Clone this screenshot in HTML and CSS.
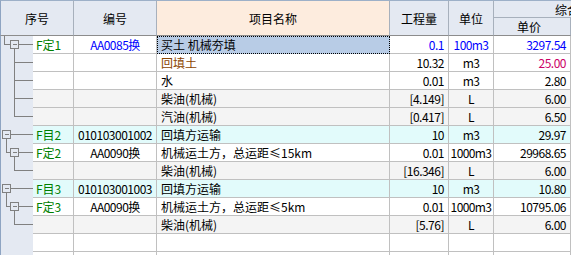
FILE: index.html
```html
<!DOCTYPE html>
<html lang="zh-CN">
<head>
<meta charset="utf-8">
<title>清单定额</title>
<link rel="stylesheet" href="styles.css">
</head>
<body>
<div class="grid">
  <div class="h h-seq">序号</div>
  <div class="h h-code">编号</div>
  <div class="h h-name">项目名称</div>
  <div class="h h-qty">工程量</div>
  <div class="h h-unit">单位</div>
  <div class="h h-group"><span class="grp">综合单价</span></div>
  <div class="h h-price">单价</div>

  <!-- row 1 -->
  <div class="t"><svg width="33" height="18" viewBox="0 0 33 18"><path d="M4.5 0V8.5H10.5M18.5 8.5H33M14.5 12.5V18" /><rect x="10.5" y="4.5" width="8" height="8"/><path d="M12.5 8.5H16.5"/></svg></div>
  <div class="c seq green">F定1</div>
  <div class="c code blue">AA0085换</div>
  <div class="c name sel">买土 机械夯填</div>
  <div class="c num blue">0.1</div>
  <div class="c unit blue">100m3</div>
  <div class="c num blue">3297.54</div>

  <!-- row 2 -->
  <div class="t"><svg width="33" height="18" viewBox="0 0 33 18"><path d="M14.5 0V18M14.5 8.5H33"/></svg></div>
  <div class="c seq"></div>
  <div class="c code"></div>
  <div class="c name brown">回填土</div>
  <div class="c num">10.32</div>
  <div class="c unit">m3</div>
  <div class="c num magenta">25.00</div>

  <!-- row 3 -->
  <div class="t"><svg width="33" height="18" viewBox="0 0 33 18"><path d="M14.5 0V18M14.5 8.5H33"/></svg></div>
  <div class="c seq"></div>
  <div class="c code"></div>
  <div class="c name">水</div>
  <div class="c num">0.01</div>
  <div class="c unit">m3</div>
  <div class="c num">2.80</div>

  <!-- row 4 -->
  <div class="t"><svg width="33" height="18" viewBox="0 0 33 18"><path d="M14.5 0V18M14.5 8.5H33"/></svg></div>
  <div class="c seq sub"></div>
  <div class="c code sub"></div>
  <div class="c name sub">柴油(机械)</div>
  <div class="c num sub">[4.149]</div>
  <div class="c unit sub">L</div>
  <div class="c num sub">6.00</div>

  <!-- row 5 -->
  <div class="t"><svg width="33" height="18" viewBox="0 0 33 18"><path d="M14.5 0V8.5H33"/></svg></div>
  <div class="c seq sub"></div>
  <div class="c code sub"></div>
  <div class="c name sub">汽油(机械)</div>
  <div class="c num sub">[0.417]</div>
  <div class="c unit sub">L</div>
  <div class="c num sub">6.50</div>

  <!-- row 6 -->
  <div class="t"><svg width="33" height="18" viewBox="0 0 33 18"><path d="M10.5 8.5H33M6.5 12.5V18"/><rect x="2.5" y="4.5" width="8" height="8"/><path d="M4.5 8.5H8.5"/></svg></div>
  <div class="c seq green item">F目2</div>
  <div class="c code item">010103001002</div>
  <div class="c name item">回填方运输</div>
  <div class="c num item">10</div>
  <div class="c unit item">m3</div>
  <div class="c num item">29.97</div>

  <!-- row 7 -->
  <div class="t"><svg width="33" height="18" viewBox="0 0 33 18"><path d="M6.5 0V8.5H10.5M18.5 8.5H33M14.5 12.5V18"/><rect x="10.5" y="4.5" width="8" height="8"/><path d="M12.5 8.5H16.5"/></svg></div>
  <div class="c seq green">F定2</div>
  <div class="c code">AA0090换</div>
  <div class="c name">机械运土方，总运距≤15km</div>
  <div class="c num">0.01</div>
  <div class="c unit">1000m3</div>
  <div class="c num">29968.65</div>

  <!-- row 8 -->
  <div class="t"><svg width="33" height="18" viewBox="0 0 33 18"><path d="M14.5 0V8.5H33"/></svg></div>
  <div class="c seq sub"></div>
  <div class="c code sub"></div>
  <div class="c name sub">柴油(机械)</div>
  <div class="c num sub">[16.346]</div>
  <div class="c unit sub">L</div>
  <div class="c num sub">6.00</div>

  <!-- row 9 -->
  <div class="t"><svg width="33" height="18" viewBox="0 0 33 18"><path d="M10.5 8.5H33M6.5 12.5V18"/><rect x="2.5" y="4.5" width="8" height="8"/><path d="M4.5 8.5H8.5"/></svg></div>
  <div class="c seq green item">F目3</div>
  <div class="c code item">010103001003</div>
  <div class="c name item">回填方运输</div>
  <div class="c num item">10</div>
  <div class="c unit item">m3</div>
  <div class="c num item">10.80</div>

  <!-- row 10 -->
  <div class="t"><svg width="33" height="18" viewBox="0 0 33 18"><path d="M6.5 0V8.5H10.5M18.5 8.5H33M14.5 12.5V18"/><rect x="10.5" y="4.5" width="8" height="8"/><path d="M12.5 8.5H16.5"/></svg></div>
  <div class="c seq green">F定3</div>
  <div class="c code">AA0090换</div>
  <div class="c name">机械运土方，总运距≤5km</div>
  <div class="c num">0.01</div>
  <div class="c unit">1000m3</div>
  <div class="c num">10795.06</div>

  <!-- row 11 -->
  <div class="t"><svg width="33" height="18" viewBox="0 0 33 18"><path d="M14.5 0V8.5H33"/></svg></div>
  <div class="c seq sub"></div>
  <div class="c code sub"></div>
  <div class="c name sub">柴油(机械)</div>
  <div class="c num sub">[5.76]</div>
  <div class="c unit sub">L</div>
  <div class="c num sub">6.00</div>

  <!-- row 12 -->
  <div class="t"></div>
  <div class="c seq"></div>
  <div class="c code"></div>
  <div class="c name"></div>
  <div class="c num"></div>
  <div class="c unit"></div>
  <div class="c num"></div>

  <!-- row 13 -->
  <div class="t"></div>
  <div class="c seq"></div>
  <div class="c code"></div>
  <div class="c name"></div>
  <div class="c num"></div>
  <div class="c unit"></div>
  <div class="c num"></div>
</div>
</body>
</html>
```

FILE: styles.css
```css
html, body {
  margin: 0;
  padding: 0;
}
body {
  width: 571px;
  height: 255px;
  overflow: hidden;
  background: #ffffff;
  font-family: "Noto Sans CJK SC", "Noto Sans", sans-serif;
  font-size: 12px;
  color: #000000;
}
.grid {
  display: grid;
  grid-template-columns: 33px 41px 83px 233px 59px 45px 77px;
  grid-template-rows: 18px 18px;
  grid-auto-rows: 18px;
  width: 571px;
}
.h {
  box-sizing: border-box;
  background: #e4e9f2;
  border-right: 1px solid #a7b0bc;
  border-top: 1px solid #9db0c8;
  display: flex;
  align-items: center;
  justify-content: center;
  font-size: 12px;
  white-space: nowrap;
  overflow: hidden;
}
.h-seq {
  grid-column: 1 / 3;
  grid-row: 1 / 3;
  border-left: 1px solid #8ea4c2;
  border-bottom: 1px solid #8c8c8c;
}
.h-code {
  grid-column: 3;
  grid-row: 1 / 3;
  border-bottom: 1px solid #8c8c8c;
}
.h-name {
  grid-column: 4;
  grid-row: 1 / 3;
  background: #fdecde;
  border-bottom: 1px solid #8c8c8c;
}
.h-qty {
  grid-column: 5;
  grid-row: 1 / 3;
  border-bottom: 1px solid #8c8c8c;
}
.h-unit {
  grid-column: 6;
  grid-row: 1 / 3;
  border-bottom: 1px solid #8c8c8c;
}
.h-group {
  grid-column: 7;
  grid-row: 1;
  border-right: none;
  border-bottom: 1px solid #a7b0bc;
  justify-content: flex-start;
  padding-left: 61px;
}
.h-price {
  grid-column: 7;
  grid-row: 2;
  border-top: none;
  border-bottom: 1px solid #8c8c8c;
  padding-right: 6px;
}
.t {
  box-sizing: border-box;
  background: #e4e9f2;
  border-left: 1px solid #8ea4c2;
  height: 18px;
  overflow: hidden;
}
.t svg {
  display: block;
  margin-left: -1px;
}
.t path, .t rect {
  fill: none;
  stroke: #808080;
  stroke-width: 1;
  shape-rendering: crispEdges;
}
.c {
  box-sizing: border-box;
  border-right: 1px solid #c0c0c0;
  border-bottom: 1px solid #c0c0c0;
  line-height: 17px;
  height: 18px;
  white-space: nowrap;
  overflow: hidden;
  padding: 0 3px;
  background: #ffffff;
}
.seq { text-align: left; }
.code { text-align: center; letter-spacing: -0.5px; }
.name { text-align: left; padding-left: 4px; }
.num { text-align: right; letter-spacing: -0.5px; padding-right: 4px; }
.unit { text-align: center; padding: 0 1px; letter-spacing: -0.6px; }
.sub { background: #f4f4f4; }
.item { background: #e2fbfb; }
.sel {
  background: #b8cce6;
  border: 1px dotted #000000;
  line-height: 16px;
  padding-left: 3px;
}
.green { color: #008000; }
.blue { color: #0000ff; }
.brown { color: #8b4500; }
.magenta { color: #cc0066; }
```
